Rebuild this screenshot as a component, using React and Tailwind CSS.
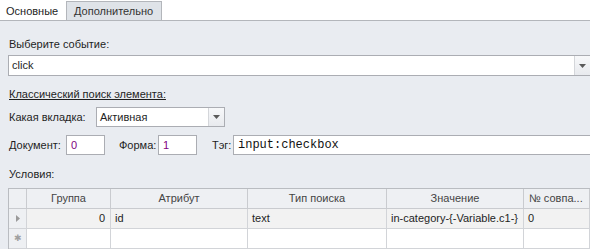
import React from "react";

const font = { fontFamily: '"Liberation Sans", Arial, sans-serif' };

const Arrow = () => (
  <svg width="7" height="4" viewBox="0 0 7 4">
    <path d="M0 0h7L3.5 4z" fill="#5a5a5a" />
  </svg>
);

const Combo = ({ value, className }) => (
  <div className={"flex h-[20px] bg-white border border-[#abadb3] " + className}>
    <div className="flex-1 pl-[3px] leading-[18px] text-[#1e1e1e]">{value}</div>
    <div className="w-[16px] flex items-center justify-center border-l border-[#d4d6da] bg-gradient-to-b from-[#f7f8fa] to-[#e8eaee]">
      <Arrow />
    </div>
  </div>
);

const cols = ["Группа", "Атрибут", "Тип поиска", "Значение", "№ совпа..."];
const grid = "grid grid-cols-[18px_84px_137px_139px_137px_1fr] h-[20px]";

export default function App() {
  return (
    <div className="w-[590px] h-[249px] overflow-hidden bg-[#e9ecf1] text-[11px] text-[#1e1e1e] whitespace-nowrap" style={font}>
      <div className="flex h-[21px] bg-white border-b border-[#b3b6bb]">
        <div className="w-[66px] bg-white pl-[6px] leading-[22px] text-[#1e1e1e]">Основные</div>
        <div className="w-[96px] mt-[1px] -mb-[1px] bg-[#dfe3e8] border border-[#b3b6bb] pl-[7px] leading-[19px] text-[#333]">
          Дополнительно
        </div>
      </div>

      <div className="pl-[8px] pt-[15px]">
        <div className="pl-[1px] leading-[16px]">Выберите событие:</div>
        <Combo value="click" className="mt-[3px] w-[583px] h-[21px]" />

        <div className="pl-[1px] mt-[10px] leading-[16px] underline">Классический поиск элемента:</div>

        <div className="flex items-center mt-[5px]">
          <span className="pl-[1px] w-[88px]">Какая вкладка:</span>
          <Combo value="Активная" className="w-[129px]" />
        </div>

        <div className="flex items-center mt-[8px]">
          <span className="pl-[1px] w-[58px]">Документ:</span>
          <div className="w-[39px] h-[20px] bg-white border border-[#abadb3] pl-[4px] leading-[18px] text-[#800080]">0</div>
          <span className="ml-[14px] w-[39px]">Форма:</span>
          <div className="w-[39px] h-[20px] bg-white border border-[#abadb3] pl-[4px] leading-[18px] text-[#800080]">1</div>
          <span className="ml-[15px] w-[21px]">Тэг:</span>
          <div
            className="flex-1 h-[20px] bg-white border border-[#abadb3] border-r-0 pl-[4px] leading-[18px] text-[12px] text-[#111]"
            style={{ fontFamily: '"Liberation Mono", "Courier New", monospace' }}
          >
            input:checkbox
          </div>
        </div>

        <div className="pl-[1px] mt-[11px] leading-[16px]">Условия:</div>

        <div className="mt-[6px] border-l border-t border-[#b9bcc1]">
          <div className={grid + " bg-[#eef0f3] text-[#444]"}>
            <div className="border-r border-b border-[#c9cbcf]" />
            {cols.map((c, i) => (
              <div
                key={c}
                className={
                  "border-r border-b border-[#c9cbcf] leading-[19px] " + (i === 4 ? "pl-[5px]" : "text-center")
                }
              >
                {c}
              </div>
            ))}
          </div>
          <div className={grid + " bg-[#f2f2f2]"}>
            <div className="border-r border-b border-[#d2d4d8] bg-[#eef0f3] flex items-center justify-center">
              <svg width="4" height="7" viewBox="0 0 4 7">
                <path d="M0 0l4 3.5L0 7z" fill="#9a9a9a" />
              </svg>
            </div>
            <div className="border-r border-b border-[#d2d4d8] text-right pr-[5px] leading-[19px]">0</div>
            <div className="border-r border-b border-[#d2d4d8] pl-[4px] leading-[19px]">id</div>
            <div className="border-r border-b border-[#d2d4d8] pl-[4px] leading-[19px]">text</div>
            <div className="border-r border-b border-[#d2d4d8] pl-[4px] leading-[19px] overflow-hidden">
              in-category-{"{"}-Variable.c1-{"}"}
            </div>
            <div className="border-r border-b border-[#d2d4d8] pl-[4px] leading-[19px]">0</div>
          </div>
          <div className={grid + " bg-white"}>
            <div className="border-r border-b border-[#d2d4d8] bg-[#eef0f3] flex items-center justify-center text-[9px] text-[#a0a0a0] leading-none">
              ✱
            </div>
            <div className="border-r border-b border-[#d2d4d8]" />
            <div className="border-r border-b border-[#d2d4d8]" />
            <div className="border-r border-b border-[#d2d4d8]" />
            <div className="border-r border-b border-[#d2d4d8]" />
            <div className="border-r border-b border-[#d2d4d8]" />
          </div>
        </div>
      </div>
    </div>
  );
}
